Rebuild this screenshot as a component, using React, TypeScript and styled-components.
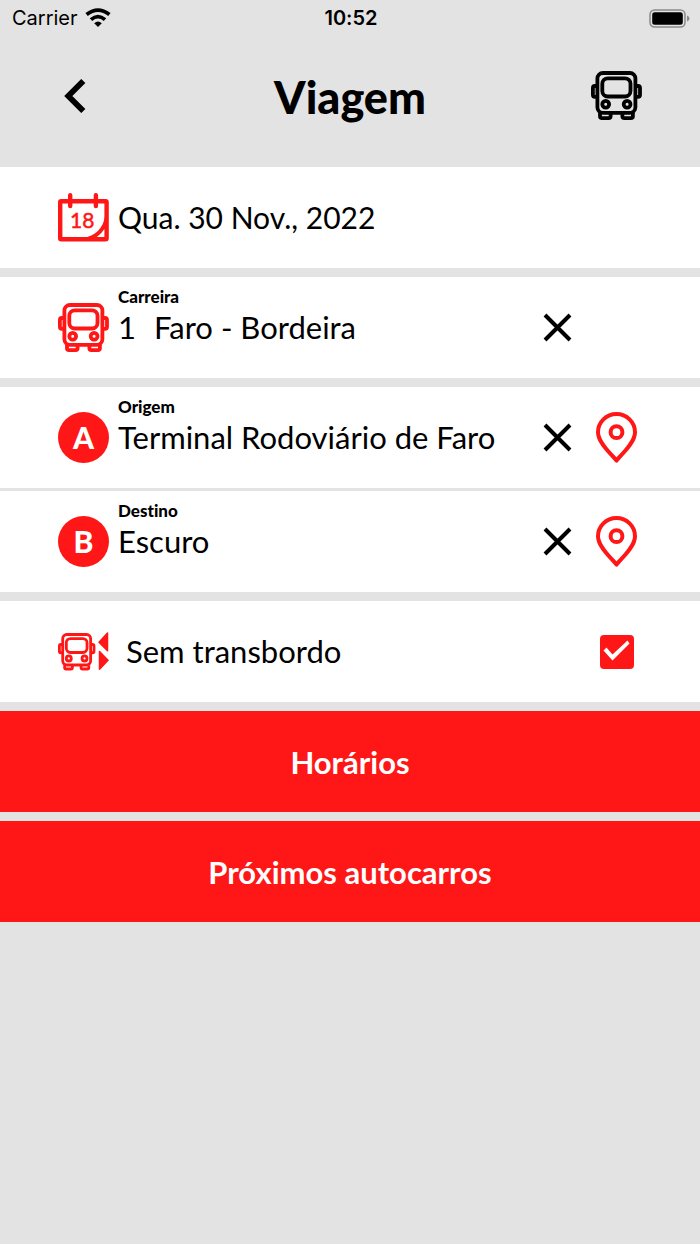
import React from "react";
import styled, { createGlobalStyle } from "styled-components";

const RED = "#ff1616";

const GlobalStyle = createGlobalStyle`
  *, *::before, *::after { box-sizing: border-box; }
  html, body { margin: 0; min-height: 100%; background: #e3e3e3; }
  body {
    color: #000;
    font-family: Lato, sans-serif;
    font-variant-ligatures: none;
  }
  button { margin: 0; padding: 0; border: 0; background: none; color: inherit; font: inherit; cursor: pointer; }
  svg { display: block; flex: none; }
`;

const StatusBar = styled.div`
  display: grid;
  grid-template-columns: 1fr auto 1fr;
  align-items: center;
  height: 36px;
  padding: 0 10px 0 12px;
  font-family: Inter, sans-serif;
  font-size: 20px;
  line-height: 24px;
`;

const Carrier = styled.div`
  display: flex;
  align-items: center;
  gap: 7px;
`;

const Clock = styled.time`
  font-weight: 600;
`;

const BatterySlot = styled.div`
  display: flex;
  justify-content: flex-end;
`;

const Header = styled.header`
  display: grid;
  grid-template-columns: 51px 1fr 51px;
  align-items: center;
  height: 131px;
  padding: 0 58px 12px;
`;

const Title = styled.h1`
  margin: 0;
  padding-top: 2px;
  font-size: 45px;
  line-height: 54px;
  font-weight: 900;
  text-align: center;
`;

const IconButton = styled.button<{ $align?: string }>`
  && {
    display: flex;
    align-items: center;
    justify-content: ${(p) => p.$align ?? "center"};
    width: 51px;
    height: 51px;
    padding: ${(p) => (p.$align ? "0 6px" : "0")};
  }
`;

const Form = styled.main`
  display: flex;
  flex-direction: column;
  gap: 9px;
`;

const Stops = styled.div`
  display: flex;
  flex-direction: column;
  gap: 3px;
`;

const Row = styled.div`
  display: grid;
  grid-template-columns: 51px 1fr 51px 51px;
  column-gap: 8px;
  align-items: center;
  height: 101px;
  padding: 0 58px;
  background: #fff;
`;

const Field = styled.button`
  && {
    display: flex;
    flex-direction: column;
    align-items: flex-start;
    justify-content: center;
    height: 101px;
    padding: 0 0 2px 1px;
    text-align: left;
    white-space: nowrap;
  }
`;

const Label = styled.span`
  height: 20px;
  margin-top: -20px;
  font-size: 17px;
  line-height: 20px;
  font-weight: 900;
`;

const Value = styled.span<{ $size?: number }>`
  display: flex;
  gap: 18px;
  font-size: ${(p) => p.$size ?? 31}px;
  line-height: 40px;
`;

const CheckLabel = styled.label`
  grid-column: 2 / 4;
  padding: 0 0 2px 9px;
  font-size: 31px;
  line-height: 40px;
  cursor: pointer;
`;

const StopBadge = styled.span`
  display: flex;
  align-items: center;
  justify-content: center;
  width: 51px;
  height: 51px;
  padding-bottom: 2px;
  border-radius: 50%;
  background: ${RED};
  color: #fff;
  font-size: 30px;
  line-height: 40px;
  font-weight: 900;
`;

const Checkbox = styled.input`
  appearance: none;
  justify-self: center;
  display: grid;
  place-items: center;
  width: 34px;
  height: 34px;
  margin: 0;
  border: 3px solid ${RED};
  border-radius: 4px;
  cursor: pointer;

  &:checked { background: ${RED}; }
  &:checked::after {
    content: "";
    width: 28px;
    height: 28px;
    background: #fff;
    clip-path: polygon(1px 13px, 4px 10px, 10px 17px, 25px 3px, 27px 6px, 10px 23px);
  }
`;

const Action = styled.button`
  && {
    height: 101px;
    background: ${RED};
    color: #fff;
    font-size: 31px;
    line-height: 42px;
    font-weight: 700;
  }
`;

const BusShape = () => (
  <g fill="none" stroke="currentColor" strokeWidth="3.8" strokeLinejoin="round">
    <rect x="6.4" y="2" width="38" height="39.8" rx="5.5" />
    <rect x="11.3" y="7.3" width="28.2" height="18.2" rx="5.5" />
    <circle cx="14.7" cy="33.3" r="3.4" />
    <circle cx="36.1" cy="33.3" r="3.4" />
    <path d="M5.5 15H3.8Q1.9 15 1.9 17V23.8Q1.9 25.8 3.8 25.8H5.5M45.3 15H47Q49 15 49 17V23.8Q49 25.8 47 25.8H45.3" />
    <path d="M9 42V45.2Q9 47.1 11 47.1H17.6Q19.6 47.1 19.6 45.2V42M31.4 42V45.2Q31.4 47.1 33.4 47.1H39.9Q41.9 47.1 41.9 45.2V42" />
  </g>
);

const BusIcon = () => (
  <svg width="51" height="49" viewBox="0 0 51 49" aria-hidden="true">
    <BusShape />
  </svg>
);

const TransferIcon = () => (
  <svg width="51" height="39" viewBox="0 0 51 39" color={RED} aria-hidden="true">
    <g transform="translate(0 1) scale(.735 .765)">
      <BusShape />
    </g>
    <path
      d="M41 10.2 49.5 1V18.8ZM41.5 19.5V37.2L50 28.2Z"
      fill={RED}
      stroke={RED}
      strokeWidth="1.5"
      strokeLinejoin="round"
    />
  </svg>
);

const CalendarIcon = () => (
  <svg width="51" height="49" viewBox="0 0 51 49" aria-hidden="true">
    <rect x="2.2" y="8.2" width="46.4" height="38" rx="1" fill="none" stroke={RED} strokeWidth="4.4" />
    <path d="M12.2 2.3V13M37.9 2.3V13" stroke={RED} strokeWidth="4.4" strokeLinecap="round" />
    <path d="M25 44.8C37 43.5 45.5 35 47 23V46H25Z" fill={RED} />
    <path d="M38.8 44Q43.5 40.8 46.4 36V44Z" fill="#fff" />
    <text
      x="24.3"
      y="35"
      fill={RED}
      stroke={RED}
      strokeWidth=".5"
      fontFamily="Lato, sans-serif"
      fontSize="21"
      textAnchor="middle"
    >
      18
    </text>
  </svg>
);

const PinIcon = () => (
  <svg width="41" height="51" viewBox="0 0 41 51" fill="none" stroke={RED} strokeWidth="4" aria-hidden="true">
    <path d="M20.5 48.6C17 43.5 2 31.5 2 20.2A18.5 18.2 0 0 1 39 20.2C39 31.5 24 43.5 20.5 48.6Z" strokeLinejoin="round" />
    <circle cx="20.5" cy="20.2" r="5.9" />
  </svg>
);

const CrossIcon = () => (
  <svg width="29" height="29" viewBox="0 0 29 29" stroke="#000" strokeWidth="4" aria-hidden="true">
    <path d="M2 2 27 27M27 2 2 27" />
  </svg>
);

const BackIcon = () => (
  <svg width="22" height="34" viewBox="0 0 22 34" fill="none" stroke="#000" strokeWidth="5.8" aria-hidden="true">
    <path d="M19.3 2 4.3 17 19.3 32" />
  </svg>
);

const WifiIcon = () => (
  <svg width="26" height="20" viewBox="0 0 26 20" fill="none" stroke="#000" strokeWidth="3.8" aria-hidden="true">
    <path d="M1.6 6.6Q13-2.4 24.4 6.6M6 11.6Q13 5.6 20 11.6" />
    <path d="M9.2 15.2Q13 11.8 16.8 15.2L13 19Z" fill="#000" stroke="none" />
  </svg>
);

const BatteryIcon = () => (
  <svg width="41" height="19" viewBox="0 0 41 19" aria-hidden="true">
    <rect x="1" y="1" width="35" height="17" rx="4.5" fill="none" stroke="#8b8b8b" strokeWidth="1.5" />
    <rect x="3.2" y="3.2" width="30.6" height="12.6" rx="2.5" />
    <path d="M38 6.5Q40.5 7.5 40.5 9.5T38 12.5Z" fill="#8b8b8b" />
  </svg>
);

interface StopRowProps {
  letter: string;
  label: string;
  value: string;
}

const StopRow = ({ letter, label, value }: StopRowProps) => (
  <Row>
    <StopBadge aria-hidden="true">{letter}</StopBadge>
    <Field type="button">
      <Label>{label}</Label>
      <Value>{value}</Value>
    </Field>
    <IconButton type="button" aria-label={`Limpar ${label}`}>
      <CrossIcon />
    </IconButton>
    <IconButton type="button" aria-label={`Mapa: ${label}`}>
      <PinIcon />
    </IconButton>
  </Row>
);

const RedIcon = styled.span`
  color: ${RED};
`;

export default function App() {
  return (
    <>
      <GlobalStyle />
      <StatusBar>
        <Carrier>
          Carrier
          <WifiIcon />
        </Carrier>
        <Clock>10:52</Clock>
        <BatterySlot>
          <BatteryIcon />
        </BatterySlot>
      </StatusBar>
      <Header>
        <IconButton type="button" aria-label="Voltar" $align="flex-start">
          <BackIcon />
        </IconButton>
        <Title>Viagem</Title>
        <BusIcon />
      </Header>
      <Form>
        <Row>
          <CalendarIcon />
          <Field type="button">
            <Value $size={30}>Qua. 30 Nov., 2022</Value>
          </Field>
        </Row>
        <Row>
          <RedIcon>
            <BusIcon />
          </RedIcon>
          <Field type="button">
            <Label>Carreira</Label>
            <Value>
              <span>1</span>
              <span>Faro - Bordeira</span>
            </Value>
          </Field>
          <IconButton type="button" aria-label="Limpar Carreira">
            <CrossIcon />
          </IconButton>
        </Row>
        <Stops>
          <StopRow letter="A" label="Origem" value="Terminal Rodoviário de Faro" />
          <StopRow letter="B" label="Destino" value="Escuro" />
        </Stops>
        <Row>
          <TransferIcon />
          <CheckLabel htmlFor="direct">Sem transbordo</CheckLabel>
          <Checkbox id="direct" type="checkbox" defaultChecked />
        </Row>
        <Action type="button">Horários</Action>
        <Action type="button">Próximos autocarros</Action>
      </Form>
    </>
  );
}
